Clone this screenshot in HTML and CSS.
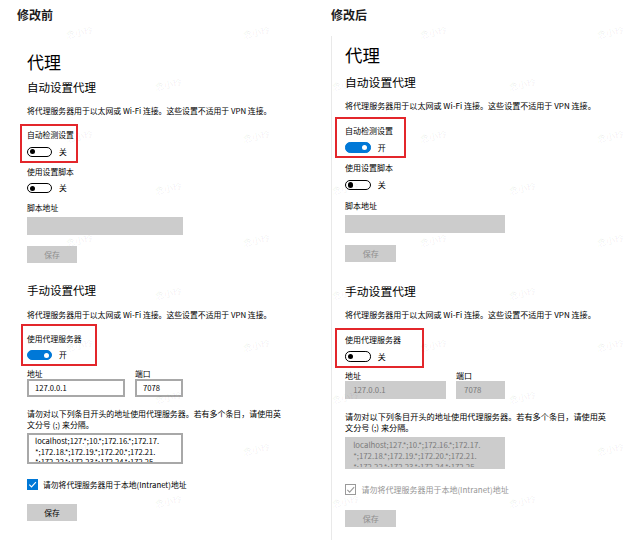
FILE: index.html
```html
<!DOCTYPE html>
<html lang="zh-CN">
<head>
<meta charset="utf-8">
<title>代理设置 修改前 / 修改后</title>
<link rel="stylesheet" href="styles.css">
</head>
<body>
<div class="page">
  <section class="panel panel-before">
    <div class="caption">修改前</div>
    <div class="screen screen-before">
      <div class="settings">
        <h1 class="title">代理</h1>
        <h2 class="subtitle">自动设置代理</h2>
        <p class="desc">将代理服务器用于以太网或 Wi-Fi 连接。这些设置不适用于 VPN 连接。</p>
        <div class="label label-first">自动检测设置</div>
        <div class="switch-row"><span class="switch"><span class="knob"></span></span><span class="state">关</span></div>
        <div class="label label-next">使用设置脚本</div>
        <div class="switch-row"><span class="switch"><span class="knob"></span></span><span class="state">关</span></div>
        <div class="label label-next">脚本地址</div>
        <div class="field field-wide field-disabled"></div>
        <div class="button button-disabled">保存</div>
        <h2 class="subtitle subtitle-manual">手动设置代理</h2>
        <p class="desc">将代理服务器用于以太网或 Wi-Fi 连接。这些设置不适用于 VPN 连接。</p>
        <div class="label label-first">使用代理服务器</div>
        <div class="switch-row"><span class="switch switch-on"><span class="knob"></span></span><span class="state">开</span></div>
        <div class="address-row">
          <div class="address-col">
            <div class="label">地址</div>
            <div class="field field-address">127.0.0.1</div>
          </div>
          <div class="port-col">
            <div class="label">端口</div>
            <div class="field field-port">7078</div>
          </div>
        </div>
        <p class="note">请勿对以下列条目开头的地址使用代理服务器。若有多个条目，请使用英<br>文分号 (;) 来分隔。</p>
        <div class="field field-area">localhost;127.*;10.*;172.16.*;172.17.<br>*;172.18.*;172.19.*;172.20.*;172.21.<br>*;172.22.*;172.23.*;172.24.*;172.25.</div>
        <div class="check-row">
          <span class="checkbox checkbox-on"><svg viewBox="0 0 11 11" width="11" height="11"><polyline points="2.3,5.7 4.5,7.9 8.9,3.1" fill="none" stroke="#fff" stroke-width="1.1"/></svg></span>
          <span class="check-label">请勿将代理服务器用于本地(Intranet)地址</span>
        </div>
        <div class="button">保存</div>
      </div>
    </div>
  </section>

  <section class="panel panel-after">
    <div class="caption">修改后</div>
    <div class="screen screen-after">
      <div class="settings settings-after">
        <h1 class="title">代理</h1>
        <h2 class="subtitle">自动设置代理</h2>
        <p class="desc">将代理服务器用于以太网或 Wi-Fi 连接。这些设置不适用于 VPN 连接。</p>
        <div class="label label-first">自动检测设置</div>
        <div class="switch-row"><span class="switch switch-on"><span class="knob"></span></span><span class="state">开</span></div>
        <div class="label label-next">使用设置脚本</div>
        <div class="switch-row"><span class="switch"><span class="knob"></span></span><span class="state">关</span></div>
        <div class="label label-next">脚本地址</div>
        <div class="field field-wide field-disabled"></div>
        <div class="button button-disabled">保存</div>
        <h2 class="subtitle subtitle-manual">手动设置代理</h2>
        <p class="desc">将代理服务器用于以太网或 Wi-Fi 连接。这些设置不适用于 VPN 连接。</p>
        <div class="label label-first">使用代理服务器</div>
        <div class="switch-row"><span class="switch"><span class="knob"></span></span><span class="state">关</span></div>
        <div class="address-row">
          <div class="address-col">
            <div class="label">地址</div>
            <div class="field field-address field-disabled">127.0.0.1</div>
          </div>
          <div class="port-col">
            <div class="label">端口</div>
            <div class="field field-port field-disabled">7078</div>
          </div>
        </div>
        <p class="note">请勿对以下列条目开头的地址使用代理服务器。若有多个条目，请使用英<br>文分号 (;) 来分隔。</p>
        <div class="field field-area field-disabled">localhost;127.*;10.*;172.16.*;172.17.<br>*;172.18.*;172.19.*;172.20.*;172.21.<br>*;172.22.*;172.23.*;172.24.*;172.25.</div>
        <div class="check-row">
          <span class="checkbox checkbox-disabled"><svg viewBox="0 0 11 11" width="11" height="11"><polyline points="2.3,5.7 4.5,7.9 8.9,3.1" fill="none" stroke="#9a9a9a" stroke-width="1.1"/></svg></span>
          <span class="check-label check-label-disabled">请勿将代理服务器用于本地(Intranet)地址</span>
        </div>
        <div class="button button-disabled">保存</div>
      </div>
    </div>
  </section>

  <div class="mark mark-1"></div>
  <div class="mark mark-2"></div>
  <div class="mark mark-3"></div>
  <div class="mark mark-4"></div>

  <div class="wm" aria-hidden="true">
    <div class="wm-row wm-a"><span>念小玲</span><span>念小玲</span><span>念小玲</span><span>念小玲</span></div>
    <div class="wm-row wm-b"><span>念小玲</span><span>念小玲</span><span>念小玲</span></div>
    <div class="wm-row wm-a"><span>念小玲</span><span>念小玲</span><span>念小玲</span><span>念小玲</span></div>
    <div class="wm-row wm-b"><span>念小玲</span><span>念小玲</span><span>念小玲</span></div>
    <div class="wm-row wm-a"><span>念小玲</span><span>念小玲</span><span>念小玲</span><span>念小玲</span></div>
    <div class="wm-row wm-b"><span>念小玲</span><span>念小玲</span><span>念小玲</span></div>
    <div class="wm-row wm-a"><span>念小玲</span><span>念小玲</span><span>念小玲</span><span>念小玲</span></div>
    <div class="wm-row wm-b"><span>念小玲</span><span>念小玲</span><span>念小玲</span></div>
    <div class="wm-row wm-a"><span>念小玲</span><span>念小玲</span><span>念小玲</span><span>念小玲</span></div>
    <div class="wm-row wm-b"><span>念小玲</span><span>念小玲</span><span>念小玲</span></div>
  </div>
</div>
</body>
</html>
```

FILE: styles.css
```css
* { box-sizing: border-box; }

html, body {
  margin: 0;
  padding: 0;
  background: #fff;
}

body {
  font-family: "Noto Sans CJK SC", "Noto Sans", sans-serif;
  color: #000;
}

.page {
  position: relative;
  width: 633px;
  height: 540px;
  overflow: hidden;
  display: flex;
}

.panel {
  display: flex;
  flex-direction: column;
  height: 540px;
}

.panel-before {
  width: 313px;
  padding-left: 17px;
}

.panel-after {
  width: 320px;
  padding-left: 18px;
}

.caption {
  margin-top: 9px;
  font-size: 12px;
  line-height: 12px;
  font-weight: 700;
  color: #1b1b1b;
}

.screen-before {
  margin-left: 10px;
}

.screen-after {
  flex: 1;
  margin-top: 15px;
  border-left: 1px solid #e9e9e9;
  padding-left: 13px;
}

.settings {
  display: flex;
  flex-direction: column;
  align-items: flex-start;
  padding-top: 32px;
}

.settings-after {
  zoom: 1.027;
  padding-top: 10px;
}

.title {
  margin: 0;
  font-size: 17px;
  line-height: 17px;
  font-weight: 400;
}

.subtitle {
  margin: 11.6px 0 0;
  font-size: 11.5px;
  line-height: 11.5px;
  font-weight: 400;
}

.subtitle-manual {
  margin-top: 21.9px;
}

.desc {
  margin: 14.3px 0 0;
  font-size: 7.85px;
  line-height: 7.7px;
  white-space: nowrap;
}

.label {
  font-size: 7.8px;
  line-height: 7.8px;
  white-space: nowrap;
}

.label-first {
  margin-top: 16.3px;
}

.label-next {
  margin-top: 11.2px;
}

.switch-row {
  display: flex;
  align-items: center;
  margin-top: 7.5px;
  height: 10px;
}

.switch {
  display: flex;
  align-items: center;
  justify-content: flex-start;
  width: 25px;
  height: 10px;
  padding: 0 2.2px;
  border: 1.3px solid #000;
  border-radius: 5px;
  background: #fff;
}

.knob {
  width: 5px;
  height: 5px;
  border-radius: 50%;
  background: #000;
}

.switch-on {
  justify-content: flex-end;
  border-color: #0078d7;
  background: #0078d7;
}

.switch-on .knob {
  background: #fff;
}

.state {
  margin-left: 7px;
  font-size: 7.8px;
  line-height: 7.8px;
}

.field {
  display: flex;
  align-items: center;
  height: 18px;
  padding-left: 6px;
  border: 2px solid #a8a8a8;
  background: #fff;
  font-size: 7.6px;
  color: #000;
  white-space: nowrap;
}

.field-wide {
  width: 156px;
  margin-top: 5px;
}

.field-disabled {
  background: #cccccc;
  border-color: #cccccc;
  color: #7b7b7b;
}

.button {
  display: flex;
  align-items: center;
  justify-content: center;
  width: 50px;
  height: 17px;
  margin-top: 14px;
  background: #cccccc;
  font-size: 7.8px;
  color: #000;
}

.field-wide + .button {
  margin-top: 11px;
}

.button-disabled {
  color: #8e8e8e;
}

.address-row {
  display: flex;
  gap: 10px;
  margin-top: 10.2px;
}

.address-col,
.port-col {
  display: flex;
  flex-direction: column;
}

.address-col .field,
.port-col .field {
  margin-top: 0.5px;
}

.field-address {
  width: 98px;
}

.field-port {
  width: 48px;
}

.note {
  margin: 11.2px 0 0;
  font-size: 7.95px;
  line-height: 11px;
  white-space: nowrap;
}

.field-area {
  display: block;
  width: 156px;
  height: 31px;
  margin-top: 3.4px;
  padding: 0.5px 0 0 6px;
  overflow: hidden;
  line-height: 10.8px;
}

.check-row {
  display: flex;
  align-items: center;
  gap: 5px;
  margin-top: 15px;
  height: 11px;
}

.checkbox {
  display: flex;
  width: 11px;
  height: 11px;
}

.checkbox svg {
  display: block;
}

.checkbox-on {
  background: #0078d7;
}

.checkbox-disabled {
  border: 1px solid #9a9a9a;
  background: #fff;
}

.checkbox-disabled svg {
  margin: -1px;
}

.check-label {
  font-size: 7.8px;
  line-height: 7.8px;
  white-space: nowrap;
}

.check-label-disabled {
  color: #959595;
}

/* red annotation rectangles drawn over the screenshots */
.mark {
  position: absolute;
  border: 2px solid #e3262b;
}

.mark-1 { left: 20px;  top: 124px; width: 58px; height: 39px; }
.mark-2 { left: 21px;  top: 324px; width: 76px; height: 42px; }
.mark-3 { left: 335px; top: 117px; width: 71px; height: 41px; }
.mark-4 { left: 335px; top: 328px; width: 89px; height: 40px; }

/* faint watermark layer */
.wm {
  position: absolute;
  left: 0;
  top: 0;
  width: 633px;
  height: 540px;
  overflow: hidden;
  pointer-events: none;
  display: flex;
  flex-direction: column;
  padding-top: 6px;
}

.wm-row {
  display: flex;
  flex-shrink: 0;
  height: 52.2px;
  align-items: center;
}

.wm-a { margin-left: -9.5px; }
.wm-b { margin-left: 79.5px; }

.wm-row span {
  flex: 0 0 177px;
  text-align: center;
  font-size: 9px;
  line-height: 9px;
  color: rgba(0, 0, 0, 0.07);
  transform: rotate(-12deg);
}
```
